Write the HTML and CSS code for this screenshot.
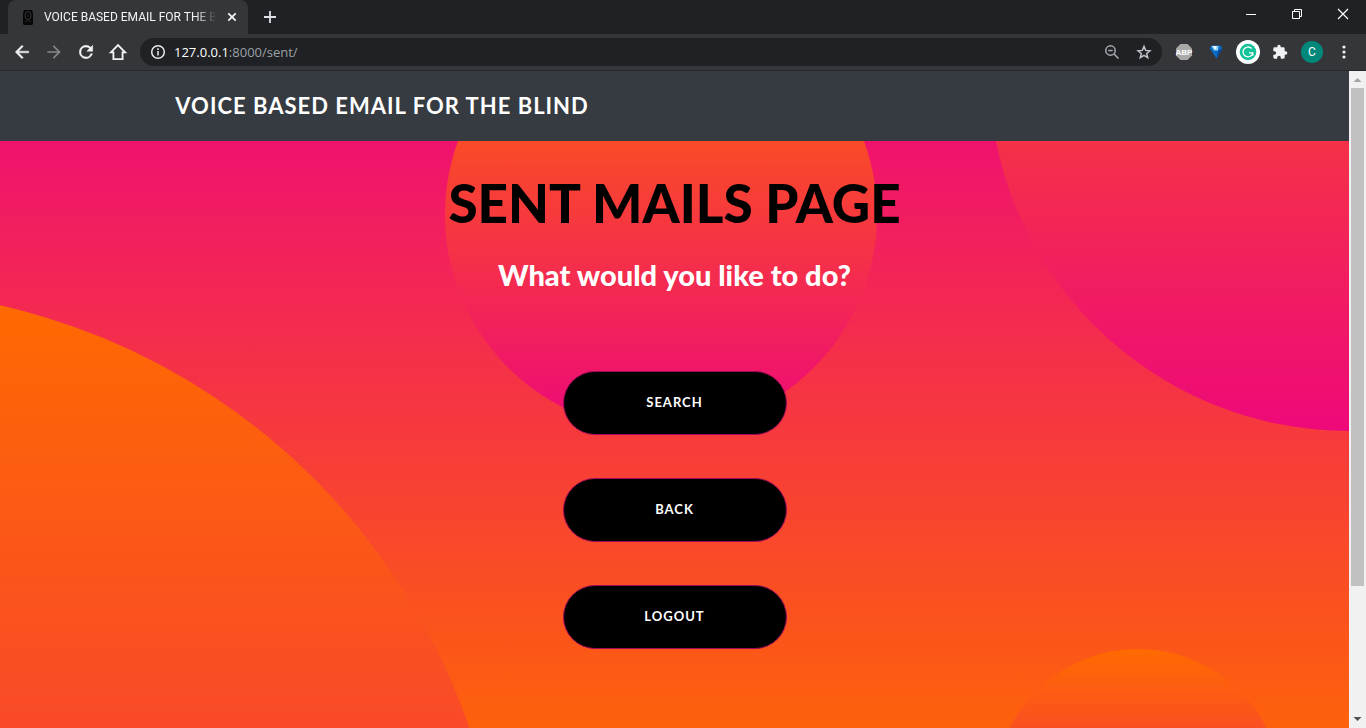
FILE: index.html
```html
<!DOCTYPE html>
<html lang="en">
<head>
<meta charset="utf-8">
<title>VOICE BASED EMAIL FOR THE BLIND</title>
<link rel="stylesheet" href="styles.css">
</head>
<body>
<header class="browser">
  <div class="tabstrip">
    <div class="tab">
      <svg class="favicon" width="16" height="16" viewBox="0 0 16 16"><path d="M4 1h8l1 3v11l-1 1H4l-1-1V4z" fill="#060606"/><ellipse cx="8" cy="6.500" rx="3" ry="4" fill="none" stroke="#38393c"/><path d="M8 5v3M5 12h6" stroke="#252629"/></svg>
      <span class="tab-title">VOICE BASED EMAIL FOR THE BLIND</span>
      <button class="icon-btn tab-close" aria-label="Close tab"><svg width="16" height="16" viewBox="0 0 16 16"><path d="M4.300 4.300l7.400 7.400M11.700 4.300l-7.400 7.400" stroke="#f1f3f4" stroke-width="1.800"/></svg></button>
    </div>
    <button class="icon-btn new-tab" aria-label="New tab"><svg width="16" height="16" viewBox="0 0 16 16"><path d="M8 2v12M2 8h12" stroke="#dee1e6" stroke-width="1.800"/></svg></button>
    <div class="window-buttons">
      <button class="icon-btn" aria-label="Minimize"><svg width="12" height="12" viewBox="0 0 12 12"><path d="M1 6.500h10" stroke="#fff"/></svg></button>
      <button class="icon-btn" aria-label="Restore"><svg width="12" height="12" viewBox="0 0 12 12" fill="none" stroke="#fff"><path d="M1.500 3.500h7v7h-7zM3.500 3.500v-2h7v7h-2"/></svg></button>
      <button class="icon-btn" aria-label="Close"><svg width="12" height="12" viewBox="0 0 12 12"><path d="M1 1l10 10M11 1L1 11" stroke="#fff" stroke-width="1.200"/></svg></button>
    </div>
  </div>
  <div class="toolbar">
    <div class="nav-buttons">
      <button class="icon-btn" aria-label="Back"><svg width="20" height="20" viewBox="0 0 24 24" fill="#f1f3f4"><path d="M20 11H7.830l5.590-5.590L12 4l-8 8 8 8 1.410-1.410L7.830 13H20z" stroke="#f1f3f4" stroke-width=".6"/></svg></button>
      <button class="icon-btn" aria-label="Forward"><svg width="20" height="20" viewBox="0 0 24 24" fill="#85868a"><path d="M12 4l-1.410 1.410L16.170 11H4v2h12.170l-5.580 5.590L12 20l8-8z"/></svg></button>
      <button class="icon-btn" aria-label="Reload"><svg width="20" height="20" viewBox="0 0 24 24" fill="#f1f3f4"><path d="M17.650 6.350A7.960 7.960 0 0 0 12 4a8 8 0 1 0 7.730 10h-2.080A6 6 0 1 1 12 6c1.660 0 3.140.69 4.220 1.780L13 11h7V4z" stroke="#f1f3f4" stroke-width=".6"/></svg></button>
      <button class="icon-btn" aria-label="Home"><svg width="20" height="20" viewBox="0 0 24 24" fill="none" stroke="#f1f3f4" stroke-width="2.200"><path d="M3.500 12.500L12 3.800l8.500 8.700H17.500V20.500h-11V12.500z"/></svg></button>
    </div>
    <div class="omnibox">
      <svg width="16" height="16" viewBox="0 0 16 16" fill="none" stroke="#e8eaed" stroke-width="1.500"><circle cx="8" cy="8" r="6.300"/><path d="M8 7v4.400M8 4.300v1.600"/></svg>
      <div class="url"><span class="host">127.0.0.1</span>:8000/sent/</div>
      <button class="icon-btn" aria-label="Zoom"><svg width="16" height="16" viewBox="0 0 16 16" fill="none" stroke="#a8abaf" stroke-width="1.500"><circle cx="6.500" cy="6.500" r="4.700"/><path d="M10 10l4.500 4.500M4.300 6.500h4.400"/></svg></button>
      <button class="icon-btn" aria-label="Bookmark"><svg width="16" height="16" viewBox="0 0 24 24" fill="none" stroke="#c3c6ca" stroke-width="2.200"><path d="M12 3.600l2.500 6 6.500.5-5 4.200 1.600 6.300-5.600-3.400-5.600 3.400L8 14.300l-5-4.200 6.500-.5z"/></svg></button>
    </div>
    <div class="extensions">
      <button class="icon-btn" aria-label="Adblock Plus"><svg width="18" height="18" viewBox="0 0 18 18"><path d="M5.500 1h7L17 5.500v7L12.500 17h-7L1 12.500v-7z" fill="#a9a9a9"/><text x="9" y="12" text-anchor="middle" class="abp">ABP</text></svg></button>
      <button class="icon-btn" aria-label="Gem extension"><svg width="14" height="14" viewBox="0 0 14 14"><path d="M.5 3L3 .5h8L13.500 3 7.500 13.500z" fill="#0a6cc4"/><path d="M2.500 1h7L9 5.500H5z" fill="#8fd3f8"/><path d="M3.500 1h4l-1 4z" fill="#eefaff"/><path d="M9 5.500L13.500 3l-6 10.500z" fill="#07489a"/></svg></button>
      <button class="icon-btn" aria-label="Grammarly"><svg width="24" height="24" viewBox="0 0 24 24"><circle cx="12" cy="12" r="12" fill="#fff"/><circle cx="12" cy="12" r="8.300" fill="#15c39a"/><path d="M15.500 8.500a4.900 4.900 0 1 0 1.300 4.300H13M16.800 12.800v3" fill="none" stroke="#fff" stroke-width="1.300"/></svg></button>
      <button class="icon-btn" aria-label="Extensions"><svg width="16" height="16" viewBox="0 0 24 24" fill="#f1f3f4"><path d="M20.500 11H19V7a2 2 0 0 0-2-2h-4V3.500a2.500 2.500 0 0 0-5 0V5H4a2 2 0 0 0-2 2v3.800h1.500a2.700 2.700 0 0 1 0 5.400H2V20c0 1.100.9 2 2 2h3.800v-1.500a2.700 2.700 0 0 1 5.400 0V22H17a2 2 0 0 0 2-2v-4h1.500a2.500 2.500 0 0 0 0-5z"/></svg></button>
      <button class="icon-btn avatar" aria-label="Profile">C</button>
      <button class="icon-btn" aria-label="Menu"><svg width="16" height="16" viewBox="0 0 16 16" fill="#f1f3f4"><circle cx="8" cy="3" r="1.600"/><circle cx="8" cy="8" r="1.600"/><circle cx="8" cy="13" r="1.600"/></svg></button>
    </div>
  </div>
</header>
<div class="viewport">
  <div class="page">
    <nav class="navbar"><a class="brand" href="#">VOICE BASED EMAIL FOR THE BLIND</a></nav>
    <main class="masthead">
      <div class="circle circle-1"></div>
      <div class="circle circle-2"></div>
      <div class="circle circle-3"></div>
      <div class="circle circle-4"></div>
      <div class="content">
        <h1 class="title">SENT MAILS PAGE</h1>
        <h2 class="subtitle">What would you like to do?</h2>
        <div class="actions">
          <button class="action">SEARCH</button>
          <button class="action">BACK</button>
          <button class="action">LOGOUT</button>
        </div>
      </div>
    </main>
  </div>
  <div class="scrollbar">
    <svg class="arrow" viewBox="0 0 17 17"><path d="M4.500 11h8l-4-4z" fill="#a3a3a3"/></svg>
    <div class="track"><div class="thumb"></div></div>
    <svg class="arrow" viewBox="0 0 17 17"><path d="M4.500 6h8l-4 4z" fill="#505050"/></svg>
  </div>
</div>
</body>
</html>
```

FILE: styles.css
```css
* { box-sizing: border-box; }
body {
  margin: 0;
  height: 100vh;
  display: flex;
  flex-direction: column;
  overflow: hidden;
  font-family: Lato, sans-serif;
}
button { font-family: inherit; cursor: pointer; }
svg { display: block; flex: none; }

.icon-btn {
  display: flex;
  align-items: center;
  justify-content: center;
  flex: none;
  padding: 0;
  border: 0;
  background: none;
}

/* Browser frame */
.browser {
  flex: none;
  background: #35363a;
  border-bottom: 1px solid #29292c;
  font-family: "Open Sans", sans-serif;
}
.tabstrip {
  display: flex;
  height: 34px;
  padding-left: 8px;
  background: #202124;
}
.tab {
  display: flex;
  align-items: center;
  gap: 8px;
  width: 240px;
  padding: 0 8px 0 12px;
  border-radius: 8px 8px 0 0;
  background: #35363a;
}
.tab-title {
  flex: 1;
  overflow: hidden;
  white-space: nowrap;
  font-family: Roboto, sans-serif;
  font-size: 12px;
  color: #f1f3f4;
  mask-image: linear-gradient(90deg, #000 88%, transparent);
}
.new-tab { width: 28px; margin-left: 8px; }
.window-buttons { display: flex; margin-left: auto; padding-bottom: 6px; }
.window-buttons .icon-btn { width: 46px; }
.toolbar {
  display: flex;
  align-items: center;
  height: 36px;
}
.nav-buttons { display: flex; padding: 0 6px; }
.nav-buttons .icon-btn { width: 32px; height: 32px; }
.omnibox {
  display: flex;
  align-items: center;
  gap: 8px;
  flex: 1;
  height: 28px;
  padding: 0 6px 0 10px;
  border-radius: 14px;
  background: #202124;
}
.omnibox .icon-btn { width: 24px; }
.url { flex: 1; font-size: 13px; color: #9aa0a6; }
.host { color: #fff; }
.extensions { display: flex; align-items: center; padding: 0 6px; }
.extensions .icon-btn { width: 32px; }
.abp { font: bold 8px "Liberation Sans", sans-serif; fill: #fff; }
.extensions .avatar {
  width: 22px;
  height: 22px;
  margin: 0 5px;
  border-radius: 50%;
  background: #00897b;
  color: #fff;
  font: 12px Roboto, sans-serif;
}

/* Page */
.viewport { display: flex; flex: 1; min-height: 0; }
.page { flex: 1; overflow: hidden; }
.navbar {
  position: relative;
  z-index: 2;
  display: flex;
  align-items: center;
  height: 70px;
  padding: 0 13% 2px;
  background: #363b42;
}
.brand {
  color: #fff;
  font-size: 22px;
  font-weight: 700;
  letter-spacing: 1px;
  text-decoration: none;
}
.masthead {
  position: relative;
  overflow: hidden;
  margin-top: -70px;
  padding: 100px 0 144px;
  background: linear-gradient(0deg, #ff6a00 0%, #ee0979 100%);
}
.circle {
  position: absolute;
  border-radius: 50%;
  background: linear-gradient(0deg, #ee0979 0%, #ff6a00 100%);
}
.circle-1 { width: 1296px; height: 1296px; bottom: -792px; left: -792px; }
.circle-2 { width: 720px; height: 720px; top: -360px; right: -360px; }
.circle-3 { width: 288px; height: 288px; bottom: -144px; right: 5%; }
.circle-4 { width: 432px; height: 432px; top: -72px; right: 35%; }
.content {
  position: relative;
  display: flex;
  flex-direction: column;
  align-items: center;
  text-align: center;
}
.title {
  margin: 0;
  font-size: 53px;
  font-weight: 900;
  line-height: 64px;
  color: #000;
}
.subtitle {
  margin: 24px 0 80px;
  font-size: 29px;
  font-weight: 900;
  line-height: 32px;
  color: #fff;
}
.actions { display: flex; flex-direction: column; gap: 43px; }
.action {
  width: 224px;
  height: 64px;
  padding: 0 0 3px;
  border: 1px solid #a00a58;
  border-radius: 32px;
  background: #000;
  color: #fff;
  font-size: 13px;
  font-weight: 700;
  letter-spacing: 1px;
}

/* Scrollbar */
.scrollbar {
  display: flex;
  flex-direction: column;
  width: 17px;
  background: #f1f1f1;
}
.arrow { width: 17px; height: 17px; }
.track { flex: 1; padding: 0 2px; }
.thumb { height: 80%; background: #c1c1c1; }
```
